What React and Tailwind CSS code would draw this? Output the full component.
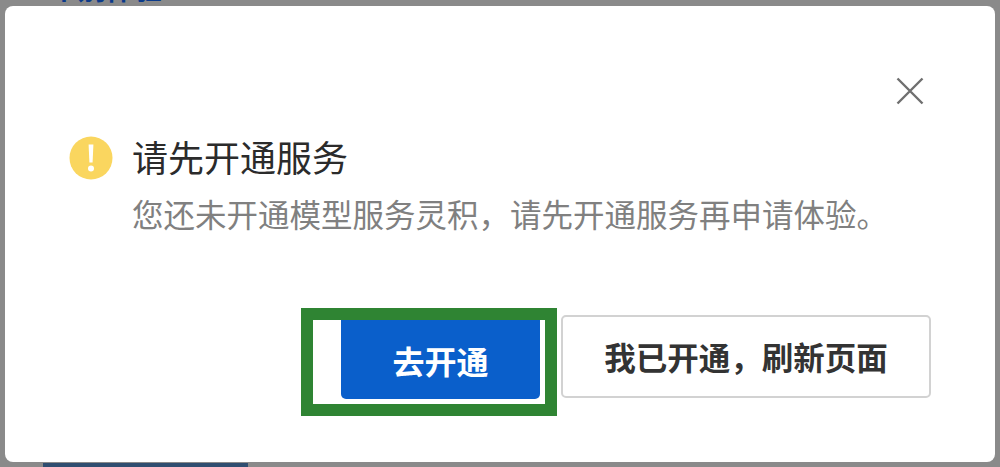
const cjk = "font-['Noto_Sans_CJK_SC','Liberation_Sans',sans-serif]";

const WarningIcon = () => (
  <svg width="44" height="44" viewBox="0 0 44 44" className="shrink-0">
    <circle cx="22" cy="22" r="21.5" fill="#fad65f" />
    <path d="M19.6 8.5h4.8l-.8 18h-3.2z" fill="#fff" />
    <circle cx="22" cy="32.5" r="3" fill="#fff" />
  </svg>
);

const CloseIcon = () => (
  <svg width="30" height="30" viewBox="0 0 30 30" fill="none">
    <path d="M2.5 2.5l25 25M27.5 2.5l-25 25" stroke="#6f6f6f" strokeWidth="2.4" />
  </svg>
);

export default function App() {
  return (
    <div className={`relative h-[467px] w-[1000px] overflow-hidden bg-[#8a8a8a] ${cjk}`}>
      {/* page showing behind the dialog */}
      <div className="absolute left-[50px] top-[-30px] text-[28px] font-bold leading-[36px] text-[#0b3a8a]">
        个别体验
      </div>
      <div className="absolute bottom-0 left-[43px] h-[4px] w-[205px] bg-[#2f4d70]" />

      {/* Dialog */}
      <div className="relative mx-[5px] mt-[6px] flex h-[456px] w-[990px] flex-col rounded-[8px] bg-white">
        <div className="flex justify-end pr-[70px] pt-[70px]">
          <CloseIcon />
        </div>

        <div className="mt-[25px] flex gap-[19px] pl-[64px]">
          <div className="pt-[5px]">
            <WarningIcon />
          </div>
          <div>
            <h2 className="text-[36px] font-normal leading-[50px] text-[#2b2b2b]">请先开通服务</h2>
            <p className="mt-[10px] text-[31.5px] leading-[44px] text-[#808080]">
              您还未开通模型服务灵积，请先开通服务再申请体验。
            </p>
          </div>
        </div>

        {/* Actions */}
        <div className="mt-[73px] flex items-start justify-end gap-[4px] pr-[64px]">
          <div className="flex h-[108px] w-[256px] justify-end border-[12px] border-[#2f8433] bg-white pr-[5px]">
            <button className="flex h-[79px] w-[199px] items-center justify-center rounded-b-[5px] bg-[#0a5fcb] text-[32px] font-bold text-white">
              去开通
            </button>
          </div>
          <button className="mt-[7px] flex h-[83px] w-[370px] items-center justify-center rounded-[5px] border-2 border-[#d2d2d2] bg-white text-[31.5px] font-bold text-[#333]">
            我已开通，刷新页面
          </button>
        </div>
      </div>
    </div>
  );
}
